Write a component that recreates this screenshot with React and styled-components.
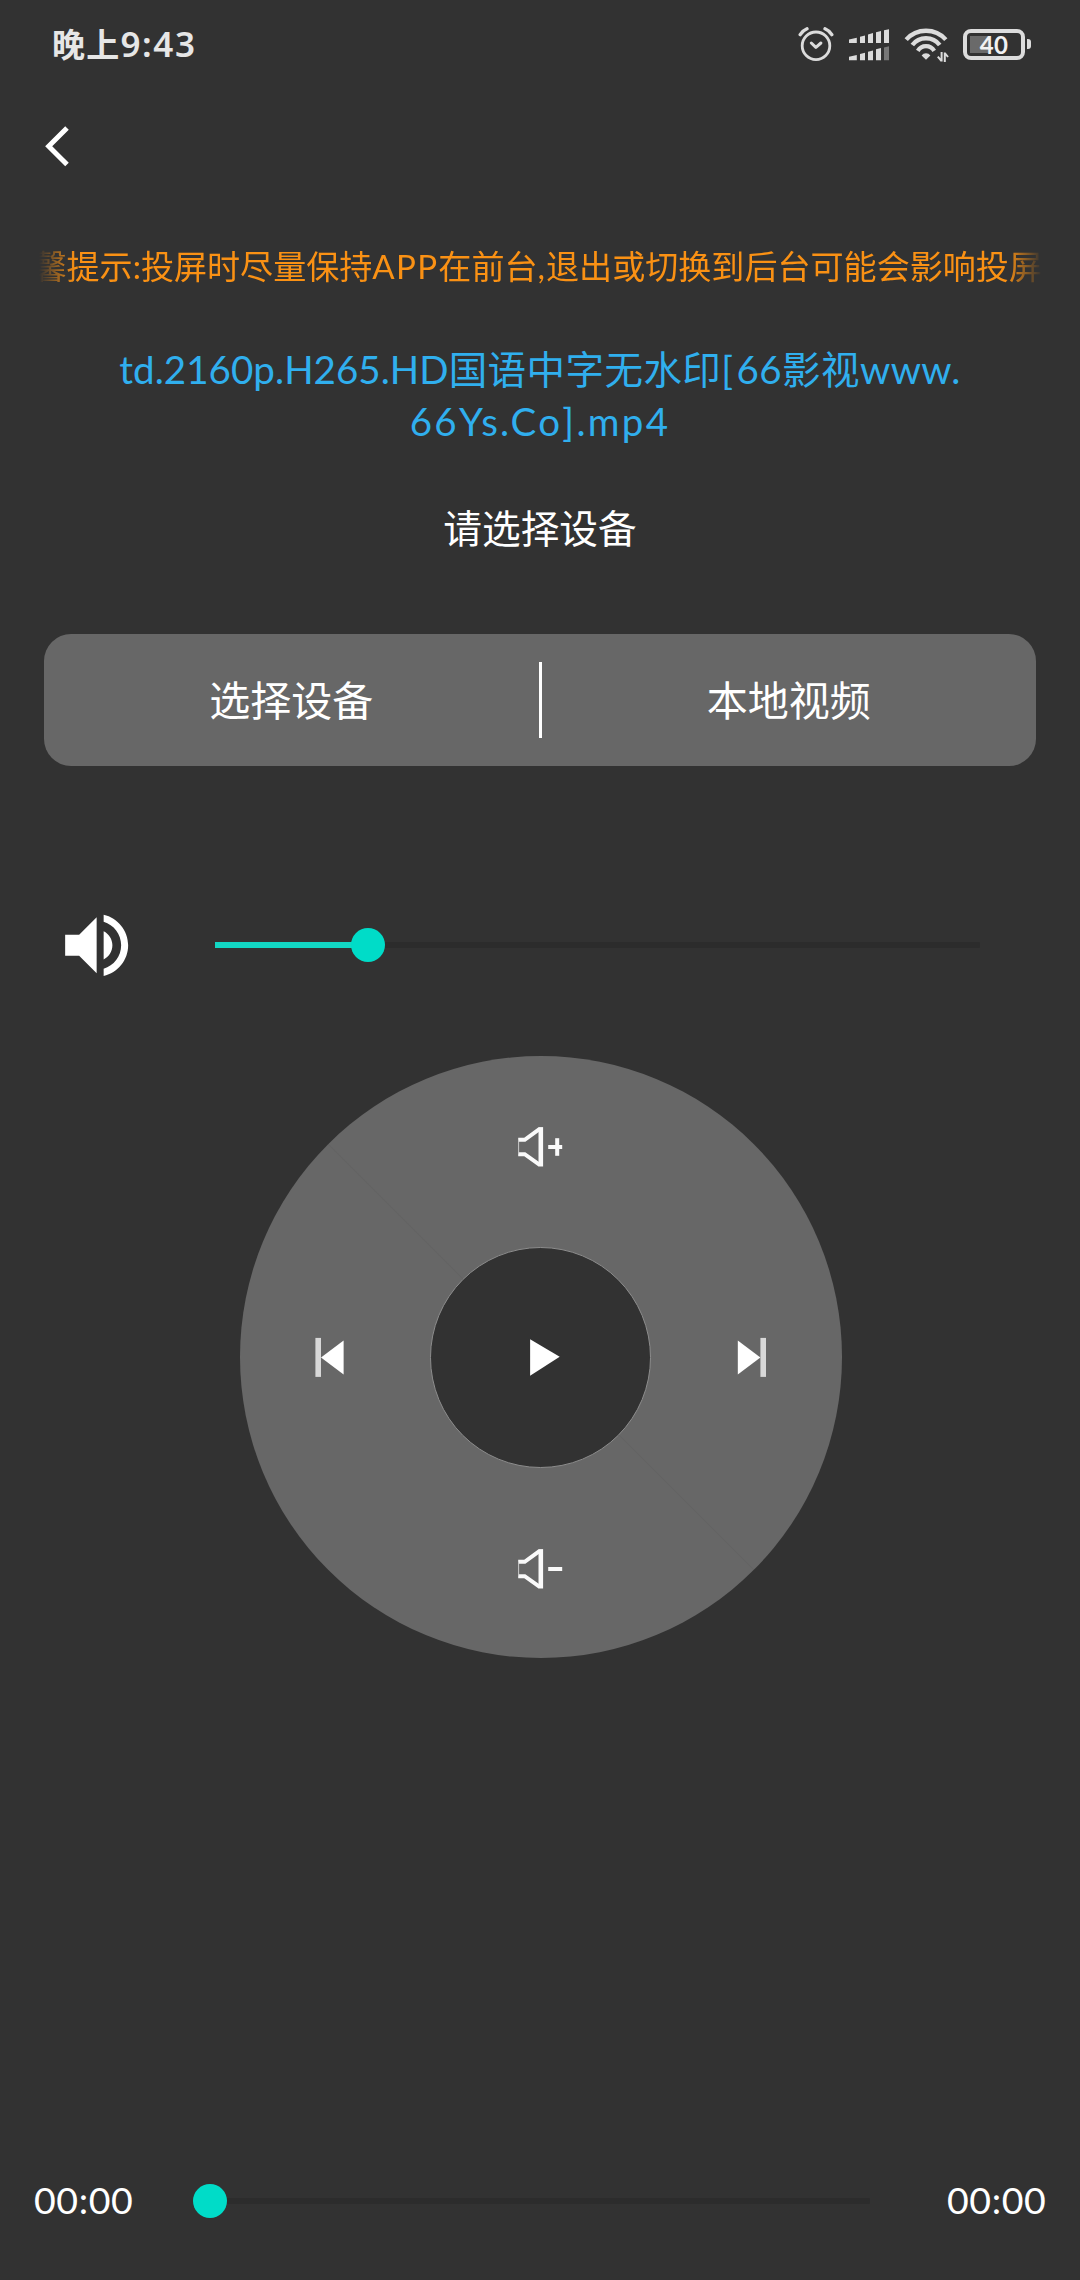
import React from "react";
import styled, { createGlobalStyle } from "styled-components";

const sans = `Lato, "Noto Sans CJK SC", sans-serif`;

const GlobalStyle = createGlobalStyle`
  *, *::before, *::after { box-sizing: border-box; }
  body { margin: 0; background: #323232; }
  button { border: 0; padding: 0; background: none; color: inherit; font: inherit; }
  svg { display: block; flex: none; }
`;

const Screen = styled.main`
  display: flex;
  flex-direction: column;
  height: 2280px;
  width: 1080px;
  overflow: hidden;
  background: #323232;
  color: #fff;
  font-family: ${sans};
`;

const StatusBar = styled.header`
  display: flex;
  align-items: center;
  justify-content: space-between;
  height: 90px;
  padding: 0 49px 0 52px;
  color: #e6e6e6;
`;

const Clock = styled.time`
  display: flex;
  align-items: baseline;
  margin-bottom: 2px;
  font: 600 33px/48px "Noto Sans", "Noto Sans CJK SC", sans-serif;
  letter-spacing: 1.2px;
`;

const ClockDigits = styled.span`
  font-size: 35px;
  letter-spacing: 1.6px;
`;

const StatusIcons = styled.div`
  display: flex;
  align-items: center;
`;

const NavBar = styled.nav`
  display: flex;
  align-items: center;
  height: 112px;
  padding-left: 40px;
`;

const BackButton = styled.button`
  display: flex;
`;

const Marquee = styled.div`
  display: flex;
  justify-content: flex-end;
  height: 48px;
  margin: 40px 38px 0 39px;
  overflow: hidden;
  white-space: nowrap;
  font-size: 33.07px;
  line-height: 48px;
  color: #fa9114;
  mask-image: linear-gradient(90deg, transparent 0, #000 36px, #000 calc(100% - 36px), transparent 100%);
`;

const Spaced = styled.span`
  letter-spacing: ${(p) => p.$by}px;
`;

const FileName = styled.h1`
  margin: 53px 0 0;
  text-align: center;
  font-size: 38.5px;
  font-weight: 400;
  line-height: 52px;
  letter-spacing: 0.45px;
  color: #30afee;
`;

const Hint = styled.p`
  margin: 51px 0 0;
  text-align: center;
  font-size: 38.7px;
  line-height: 60px;
`;

const ActionBar = styled.section`
  display: flex;
  align-items: center;
  height: 132px;
  margin: 76px 44px 0;
  border-radius: 27px;
  background: #676767;
`;

const Action = styled.button`
  flex: 1;
  padding-top: 1px;
  font-size: 41px;
  line-height: 60px;
`;

const Divider = styled.span`
  width: 3px;
  height: 76px;
  background: #fff;
`;

const VolumeRow = styled.section`
  display: flex;
  align-items: center;
  height: 84px;
  margin-top: 137px;
  padding: 0 100px 0 55px;
  gap: 76px;
`;

const Track = styled.div`
  display: flex;
  align-items: center;
  flex: 1;
  height: 6px;
  border-radius: 1px;
  background: #2c2c2c;
`;

const Fill = styled.span`
  width: ${(p) => p.$value}%;
  height: 6px;
  background: #12d7c4;
`;

const Thumb = styled.span`
  flex: none;
  width: 34px;
  height: 34px;
  margin-left: -17px;
  border-radius: 50%;
  background: #00dcc8;
`;

const Wheel = styled.section`
  display: grid;
  grid-template: 180px 242px 180px / 180px 242px 180px;
  place-items: center;
  width: 602px;
  height: 602px;
  margin: 69px 0 0 239.5px;
  border-radius: 50%;
  background: linear-gradient(45deg, transparent calc(50% - 1px), #636363 50%, transparent calc(50% + 1px)), #676767;
`;

const WheelButton = styled.button`
  display: grid;
  place-items: center;
  grid-area: ${(p) => p.$area};
`;

const Hub = styled(WheelButton)`
  width: 221px;
  height: 221px;
  border: 1px solid #8c8c8c;
  border-radius: 50%;
  background: #323232;
`;

const Progress = styled.footer`
  display: flex;
  align-items: center;
  height: 60px;
  margin: auto 0 49px;
  padding: 0 33px 0 34px;
`;

const ProgressTrack = styled(Track)`
  margin: 0 77px 0 76px;
`;

const Time = styled.span`
  width: 100px;
  margin-bottom: 2px;
  font-size: 37.5px;
  line-height: 60px;
  letter-spacing: 0.6px;
`;

function AlarmIcon() {
  return (
    <svg width="36" height="36" viewBox="798 27 36 36" fill="none" stroke="#dcdcdc" strokeLinecap="round" strokeLinejoin="round">
      <circle cx="816" cy="45.8" r="13.8" strokeWidth="2.8" />
      <path d="M811.3 43l4.6 4.4 5-4.4" strokeWidth="3" />
      <path d="M800.2 34.6q2.5-4 6.8-5.8M831.8 34.6q-2.5-4-6.8-5.8" strokeWidth="3.4" />
    </svg>
  );
}

function SignalIcon() {
  return (
    <svg width="44" height="36" viewBox="847 27 44 36" fill="#dcdcdc">
      <path d="M849 39.5l7.8-1.8V43H849zM860 36.7l5-1.2V43h-5zM868 34.4l5-1.3V43h-5zM876 32.2l5-1.3V43h-5zM884 30.2l5-1V43h-5z" />
      <path d="M849 56.8l7.8-1.8v5.2H849zM860 54l5-1.3v7.5h-5zM868 51.7l5-1.3v9.8h-5zM876 49.2l5-1.3v12.3h-5z" />
      <path fill="#777" d="M884 47.4l5-1.2v14h-5z" />
    </svg>
  );
}

function WifiIcon() {
  return (
    <svg width="46" height="36" viewBox="903 27 46 36" fill="none" stroke="#dcdcdc">
      <path d="M906.2 39.6a26.5 26.5 0 0 1 39.6 0" strokeWidth="4.4" />
      <path d="M912.3 45a17.2 17.2 0 0 1 27.4 0" strokeWidth="4.4" />
      <path d="M917.8 50.8a9.6 9.6 0 0 1 16.4 0" strokeWidth="4.2" />
      <path d="M921.6 55.4a5.4 5.4 0 0 1 8.8 0L926 59.8z" fill="#dcdcdc" stroke="none" />
      <path d="M941.6 52V61.4M937.8 56.6l3.8 4.6M944.8 62v-9.6M944.8 53l3.2 4" strokeWidth="2" />
    </svg>
  );
}

const Battery = styled.div`
  display: flex;
  align-items: center;
  gap: 2px;
  margin: 0 0 2px 14px;
`;

const BatteryShell = styled.div`
  display: grid;
  place-items: center;
  width: 62px;
  height: 31px;
  border: 4px solid #dcdcdc;
  border-radius: 8px;
  background: linear-gradient(#6a6a6a, #6a6a6a) 3px 3px / 20px 17px no-repeat;
  font: 700 24px/23px Lato, sans-serif;
  letter-spacing: 0.4px;
  color: #f2f2f2;
`;

const BatteryTip = styled.span`
  width: 4px;
  height: 10px;
  border-radius: 0 3px 3px 0;
  background: #dcdcdc;
`;

const IconGap = styled.span`
  width: ${(p) => p.$w}px;
`;

function BackIcon() {
  return (
    <svg width="32" height="44" viewBox="40 124 32 44" fill="none" stroke="#fff" strokeWidth="5">
      <path d="M67 128L48.7 146.3 67 164.6" />
    </svg>
  );
}

function SpeakerIcon() {
  return (
    <svg width="84" height="84" viewBox="0.1 -0.1 24 24" fill="#fff">
      <path d="M3 9v6h4l5 5V4L7 9H3zm13.5 3c0-1.77-1.02-3.29-2.5-4.03v8.05c1.48-.73 2.5-2.25 2.5-4.02zM14 3.23v2.06c2.89.86 5 3.54 5 6.71s-2.11 5.85-5 6.71v2.06c4.01-.91 7-4.49 7-8.77s-2.99-7.86-7-8.77z" />
    </svg>
  );
}

function VolumeStepIcon({ up }) {
  return (
    <svg width="46" height="44" viewBox="0.8 -0.8 46 44" fill="none" stroke="#fafafa" strokeWidth="4">
      <path d="M1 15h6.5L22.5 4" />
      <path d="M1 29.4h6.5L22.5 40" />
      <path d="M1.4 15v14" strokeWidth="1" stroke="#c8c8c8" />
      <path d="M23.6 2.3v39.4" strokeWidth="4.6" />
      <path d="M31 22.2h14" />
      {up && <path d="M40 13.4v17.6" />}
    </svg>
  );
}

function SkipIcon({ back }) {
  return (
    <svg width="30" height="40" viewBox={back ? "0.6 -0.4 30 40" : "0 -0.4 30 40"} transform={back ? undefined : "scale(-1 1)"}>
      <path d="M1 .5h5.6v39H1z" fill="#d8d8d8" />
      <path d="M6.6 20L29.2 3v34z" fill="#fff" />
    </svg>
  );
}

function PlayIcon() {
  return (
    <svg width="38" height="38" viewBox="0.3 -0.3 38 38" fill="#fff">
      <path d="M8.4 1L38 18.4 8.4 37.4z" />
    </svg>
  );
}

export default function App() {
  return (
    <Screen>
      <GlobalStyle />
      <StatusBar>
        <Clock>
          晚上<ClockDigits>9:43</ClockDigits>
        </Clock>
        <StatusIcons>
          <AlarmIcon />
          <IconGap $w={13} />
          <SignalIcon />
          <IconGap $w={12} />
          <WifiIcon />
          <Battery>
            <BatteryShell>40</BatteryShell>
            <BatteryTip />
          </Battery>
        </StatusIcons>
      </StatusBar>
      <NavBar>
        <BackButton aria-label="返回">
          <BackIcon />
        </BackButton>
      </NavBar>
      <Marquee>
        <span>
          馨提示:投屏时尽量保持<Spaced $by={1.3}>APP</Spaced>在前台<Spaced $by={1}>,</Spaced>退出或切换到后台可能会影响投屏
        </span>
      </Marquee>
      <FileName>
        <Spaced $by={0.05}>td.2160p.H265.HD</Spaced>国语中字无水印<Spaced $by={3.4}>[</Spaced>66影视www.
        <br />
        <Spaced $by={2.3}>66Ys.Co].mp4</Spaced>
      </FileName>
      <Hint>请选择设备</Hint>
      <ActionBar>
        <Action>选择设备</Action>
        <Divider />
        <Action>本地视频</Action>
      </ActionBar>
      <VolumeRow>
        <SpeakerIcon />
        <Track>
          <Fill $value={20} />
          <Thumb />
        </Track>
      </VolumeRow>
      <Wheel>
        <WheelButton $area="1 / 2" aria-label="音量加">
          <VolumeStepIcon up />
        </WheelButton>
        <WheelButton $area="2 / 1" aria-label="上一个">
          <SkipIcon back />
        </WheelButton>
        <Hub $area="2 / 2" aria-label="播放">
          <PlayIcon />
        </Hub>
        <WheelButton $area="2 / 3" aria-label="下一个">
          <SkipIcon />
        </WheelButton>
        <WheelButton $area="3 / 2" aria-label="音量减">
          <VolumeStepIcon />
        </WheelButton>
      </Wheel>
      <Progress>
        <Time>00:00</Time>
        <ProgressTrack>
          <Fill $value={0} />
          <Thumb />
        </ProgressTrack>
        <Time>00:00</Time>
      </Progress>
    </Screen>
  );
}
